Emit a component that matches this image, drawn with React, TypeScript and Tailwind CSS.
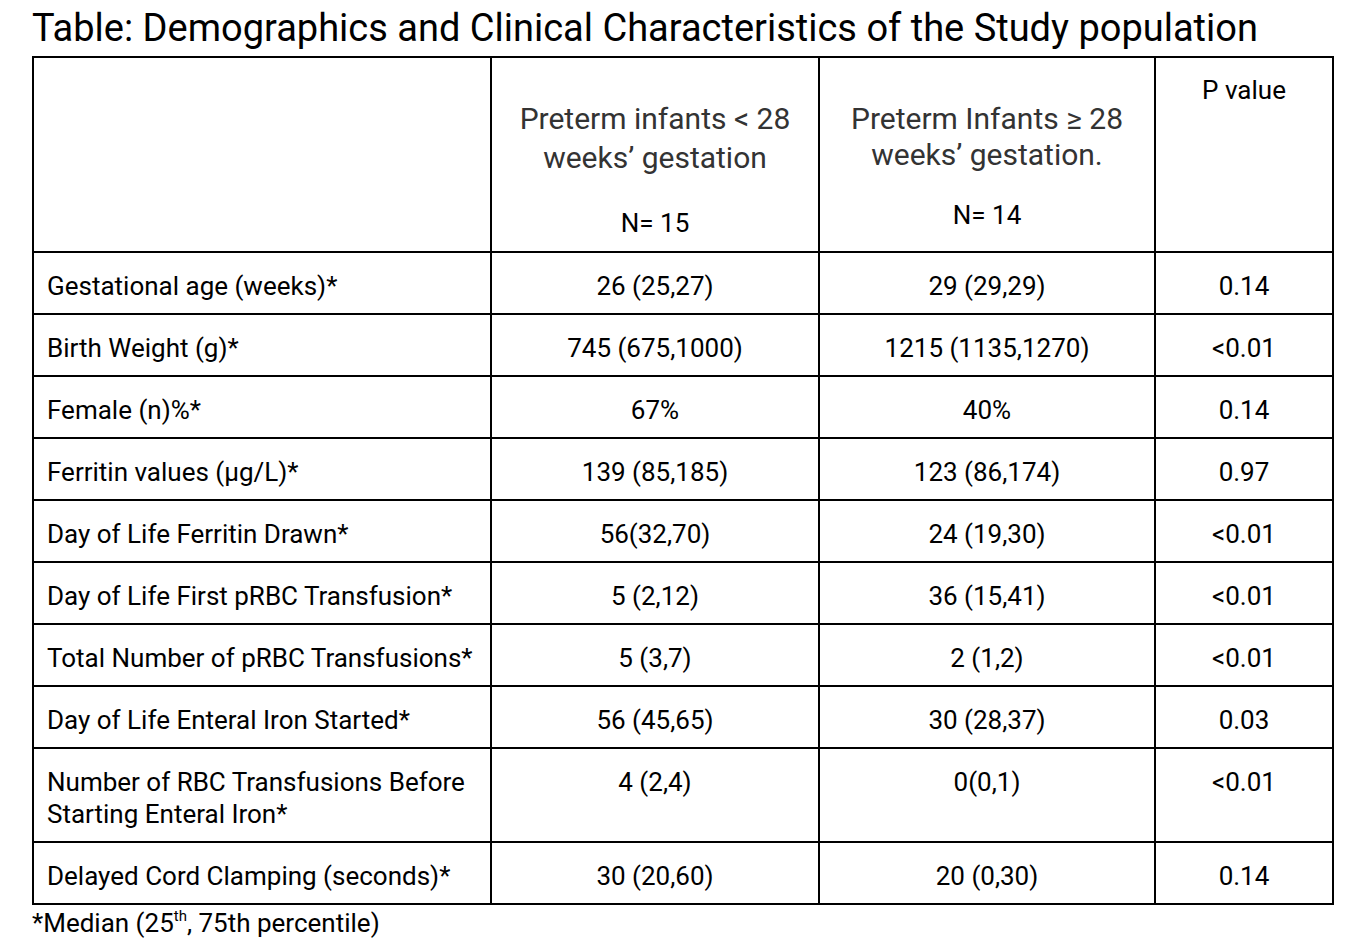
const rows: [string, string, string, string][] = [
  ['Gestational age (weeks)*', '26 (25,27)', '29 (29,29)', '0.14'],
  ['Birth Weight (g)*', '745 (675,1000)', '1215 (1135,1270)', '<0.01'],
  ['Female (n)%*', '67%', '40%', '0.14'],
  ['Ferritin values (µg/L)*', '139 (85,185)', '123 (86,174)', '0.97'],
  ['Day of Life Ferritin Drawn*', '56(32,70)', '24 (19,30)', '<0.01'],
  ['Day of Life First pRBC Transfusion*', '5 (2,12)', '36 (15,41)', '<0.01'],
  ['Total Number of pRBC Transfusions*', '5 (3,7)', '2 (1,2)', '<0.01'],
  ['Day of Life Enteral Iron Started*', '56 (45,65)', '30 (28,37)', '0.03'],
  ['Number of RBC Transfusions Before Starting Enteral Iron*', '4 (2,4)', '0(0,1)', '<0.01'],
  ['Delayed Cord Clamping (seconds)*', '30 (20,60)', '20 (0,30)', '0.14'],
];

export default function App() {
  return (
    <div className="min-h-screen bg-white pl-8 pt-[5px] text-black" style={{ fontFamily: 'Roboto, "Liberation Sans", sans-serif' }}>
      <h1 className="text-[38px] leading-[46px] text-black">
        Table: Demographics and Clinical Characteristics of the Study population
      </h1>
      <table className="mt-[5px] w-[1300px] table-fixed border-collapse border-2 border-black text-[26px] leading-[32px]">
        <colgroup>
          <col className="w-[458px]" />
          <col className="w-[328px]" />
          <col className="w-[336px]" />
          <col className="w-[178px]" />
        </colgroup>
        <thead>
          <tr className="h-[195px]">
            <th className="border-2 border-black" />
            <th className="border-2 border-black align-top font-normal">
              <div className="mt-[41px] text-[30px] leading-[39px] text-[#333]">
                Preterm infants &lt; 28
                <br />
                weeks’ gestation
              </div>
              <div className="mt-[30px] text-[26px] leading-[32px]">N= 15</div>
            </th>
            <th className="border-2 border-black align-top font-normal">
              <div className="mt-[43px] text-[30px] leading-[36px] text-[#333]">
                Preterm Infants ≥ 28
                <br />
                weeks’ gestation.
              </div>
              <div className="mt-[26px] text-[26px] leading-[32px]">N= 14</div>
            </th>
            <th className="border-2 border-black align-top font-normal">
              <div className="mt-[16px] text-[26px] leading-[32px]">P value</div>
            </th>
          </tr>
        </thead>
        <tbody>
          {rows.map(([label, a, b, p]) => (
            <tr key={label}>
              <td className="border-2 border-black px-[13px] pt-[17px] pb-[11px] align-top">{label}</td>
              <td className="border-2 border-black pt-[17px] pb-[11px] text-center align-top">{a}</td>
              <td className="border-2 border-black pt-[17px] pb-[11px] text-center align-top">{b}</td>
              <td className="border-2 border-black pt-[17px] pb-[11px] text-center align-top">{p}</td>
            </tr>
          ))}
        </tbody>
      </table>
      <p className="text-[26px] leading-[36px]">
        *Median (25<sup className="relative -top-[11px] text-[15px]">th</sup>, 75th percentile)
      </p>
    </div>
  );
}
